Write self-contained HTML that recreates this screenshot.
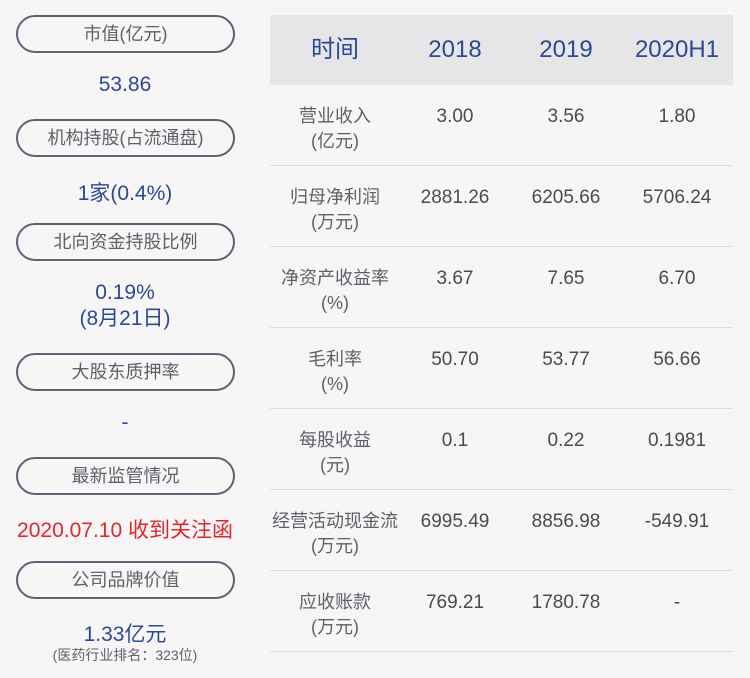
<!DOCTYPE html>
<html><head><meta charset="utf-8"><style>
body{margin:0;width:750px;height:678px;background:#f8f5f6;font-family:"Liberation Sans","Noto Sans CJK SC",sans-serif;position:relative;overflow:hidden}
.pill{position:absolute;left:16px;width:215px;height:34px;border:2px solid #5b6474;border-radius:19px;text-align:center;line-height:34px;font-size:18px;color:#5f6068}
.v{position:absolute;left:0;width:250px;text-align:center;font-size:21px;color:#2b4a93}
.hd{position:absolute;left:270px;top:15px;width:463px;height:70px;background:#e6e5e7}
.c{position:absolute;text-align:center;width:120px}
.h{top:15px;line-height:70px;font-size:24px;color:#2b4a93}
.line{position:absolute;left:270px;width:463px;height:1px;background:#dedcde}
.lab{font-size:18px;color:#5f6068;line-height:25px}
.num{font-size:19px;color:#4a4a50;line-height:25px}
</style></head><body>
<div class="pill" style="top:15px">市值(亿元)</div>
<div class="v" style="top:73px">53.86</div>
<div class="pill" style="top:119px">机构持股(占流通盘)</div>
<div class="v" style="top:177px">1家(0.4%)</div>
<div class="pill" style="top:223px">北向资金持股比例</div>
<div class="v" style="top:280px;line-height:26px">0.19%<br>(8月21日)</div>
<div class="pill" style="top:353px">大股东质押率</div>
<div class="v" style="top:411px">-</div>
<div class="pill" style="top:457px">最新监管情况</div>
<div class="v" style="top:514px;color:#e0262d">2020.07.10 收到关注函</div>
<div class="pill" style="top:561px">公司品牌价值</div>
<div class="v" style="top:618px">1.33亿元</div>
<div class="v" style="top:645px;font-size:14px;color:#5f6068">(医药行业排名：323位)</div>

<div class="hd"></div>
<div class="c h" style="left:275px">时间</div>
<div class="c h" style="left:395px">2018</div>
<div class="c h" style="left:506px">2019</div>
<div class="c h" style="left:617px">2020H1</div>

<div id="rows"></div>
<script>
var r=[["营业收入","(亿元)","3.00","3.56","1.80"],["归母净利润","(万元)","2881.26","6205.66","5706.24"],["净资产收益率","(%)","3.67","7.65","6.70"],["毛利率","(%)","50.70","53.77","56.66"],["每股收益","(元)","0.1","0.22","0.1981"],["经营活动现金流","(万元)","6995.49","8856.98","-549.91"],["应收账款","(万元)","769.21","1780.78","-"]];
var h="";
r.forEach(function(x,i){var t=85+i*81+19;
h+='<div class="c lab" style="left:270px;width:130px;top:'+t+'px">'+x[0]+'<br>'+x[1]+'</div>';
h+='<div class="c num" style="left:395px;top:'+t+'px">'+x[2]+'</div>';
h+='<div class="c num" style="left:506px;top:'+t+'px">'+x[3]+'</div>';
h+='<div class="c num" style="left:617px;top:'+t+'px">'+x[4]+'</div>';
h+='<div class="line" style="top:'+(165+i*81)+'px"></div>';});
document.getElementById("rows").innerHTML=h;
</script>
</body></html>
